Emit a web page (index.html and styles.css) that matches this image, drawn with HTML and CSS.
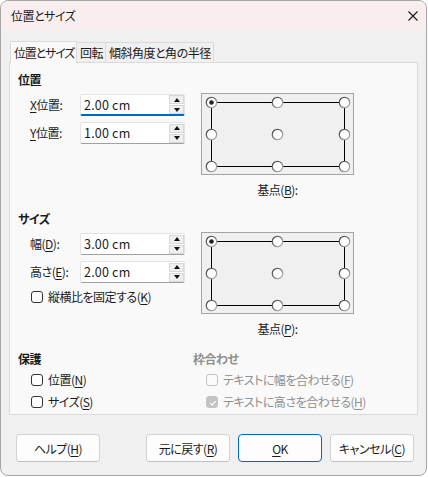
FILE: index.html
```html
<!DOCTYPE html>
<html lang="ja">
<head>
<meta charset="utf-8">
<title>位置とサイズ</title>
<link rel="stylesheet" href="styles.css">
</head>
<body>
<div class="window">
  <div class="titlebar">
    <span class="title">位置とサイズ</span>
    <svg class="close" width="10" height="10" viewBox="0 0 10 10"><path d="M0.5 0.5 L9.5 9.5 M9.5 0.5 L0.5 9.5" stroke="#1a1a1a" stroke-width="1.1" fill="none"/></svg>
  </div>
  <div class="tabs">
    <div class="tab active">位置とサイズ</div>
    <div class="tab">回転</div>
    <div class="tab">傾斜角度と角の半径</div>
  </div>
  <div class="panel">
    <div class="heading">位置</div>
    <div class="group-body">
      <div class="fields">
        <div class="row"><span class="label"><u>X</u>位置:</span>
          <div class="spin focused"><span class="val">2.00 cm</span><div class="arrows"><b class="up"></b><b class="down"></b></div></div>
        </div>
        <div class="row"><span class="label"><u>Y</u>位置:</span>
          <div class="spin"><span class="val">1.00 cm</span><div class="arrows"><b class="up"></b><b class="down"></b></div></div>
        </div>
      </div>
      <div class="anchor">
        <svg width="153" height="82" viewBox="0 0 153 82">
          <defs><linearGradient id="g1" x1="0" y1="0" x2="1" y2="1"><stop offset="0" stop-color="#3c3c3c"/><stop offset="1" stop-color="#c0c0c0"/></linearGradient></defs>
          <rect x="0.5" y="0.5" width="152" height="81" fill="#f0f0f0" stroke="#a3a3a3"/>
          <rect x="10.5" y="9.5" width="133" height="64" fill="none" stroke="#000"/>
          <g fill="#fff" stroke="url(#g1)" stroke-width="1.3">
            <circle cx="10.5" cy="9.5" r="5.2"/><circle cx="76.5" cy="9.5" r="5.2"/><circle cx="143.5" cy="9.5" r="5.2"/>
            <circle cx="10.5" cy="41.5" r="5.2"/><circle cx="76.5" cy="41.5" r="5.2"/><circle cx="143.5" cy="41.5" r="5.2"/>
            <circle cx="10.5" cy="73.5" r="5.2"/><circle cx="76.5" cy="73.5" r="5.2"/><circle cx="143.5" cy="73.5" r="5.2"/>
          </g>
          <circle cx="10.5" cy="9.5" r="2.3" fill="#222"/>
        </svg>
        <div class="caption">基点(<u>B</u>):</div>
      </div>
    </div>

    <div class="heading sec2">サイズ</div>
    <div class="group-body">
      <div class="fields">
        <div class="row"><span class="label">幅(<u>D</u>):</span>
          <div class="spin"><span class="val">3.00 cm</span><div class="arrows"><b class="up"></b><b class="down"></b></div></div>
        </div>
        <div class="row"><span class="label">高さ(<u>E</u>):</span>
          <div class="spin"><span class="val">2.00 cm</span><div class="arrows"><b class="up"></b><b class="down"></b></div></div>
        </div>
        <div class="check keep"><span class="box"></span><span>縦横比を固定する(<u>K</u>)</span></div>
      </div>
      <div class="anchor">
        <svg width="153" height="82" viewBox="0 0 153 82">
          <defs><linearGradient id="g2" x1="0" y1="0" x2="1" y2="1"><stop offset="0" stop-color="#3c3c3c"/><stop offset="1" stop-color="#c0c0c0"/></linearGradient></defs>
          <rect x="0.5" y="0.5" width="152" height="81" fill="#f0f0f0" stroke="#a3a3a3"/>
          <rect x="10.5" y="9.5" width="133" height="64" fill="none" stroke="#000"/>
          <g fill="#fff" stroke="url(#g2)" stroke-width="1.3">
            <circle cx="10.5" cy="9.5" r="5.2"/><circle cx="76.5" cy="9.5" r="5.2"/><circle cx="143.5" cy="9.5" r="5.2"/>
            <circle cx="10.5" cy="41.5" r="5.2"/><circle cx="76.5" cy="41.5" r="5.2"/><circle cx="143.5" cy="41.5" r="5.2"/>
            <circle cx="10.5" cy="73.5" r="5.2"/><circle cx="76.5" cy="73.5" r="5.2"/><circle cx="143.5" cy="73.5" r="5.2"/>
          </g>
          <circle cx="10.5" cy="9.5" r="2.3" fill="#222"/>
        </svg>
        <div class="caption">基点(<u>P</u>):</div>
      </div>
    </div>

    <div class="bottom-groups">
      <div class="col">
        <div class="heading">保護</div>
        <div class="check"><span class="box"></span><span>位置(<u>N</u>)</span></div>
        <div class="check"><span class="box"></span><span>サイズ(<u>S</u>)</span></div>
      </div>
      <div class="col disabled">
        <div class="heading">枠合わせ</div>
        <div class="check"><span class="box"></span><span>テキストに幅を合わせる(<u>F</u>)</span></div>
        <div class="check"><span class="box checked"><svg width="12" height="12" viewBox="0 0 12 12"><path d="M3.2 6.2 L5.2 8 L8.8 4.2" stroke="#fff" stroke-width="1.2" fill="none"/></svg></span><span>テキストに高さを合わせる(<u>H</u>)</span></div>
      </div>
    </div>
  </div>
  <div class="buttons">
    <button class="btn help">ヘルプ(<u>H</u>)</button>
    <button class="btn">元に戻す(<u>R</u>)</button>
    <button class="btn ok"><u>O</u>K</button>
    <button class="btn">キャンセル(<u>C</u>)</button>
  </div>
</div>
</body>
</html>
```
FILE: styles.css
```css
html, body {
  margin: 0;
  background: #ffffff;
}
body {
  font-family: "Noto Sans CJK JP", "Noto Sans", sans-serif;
  font-size: 12px;
  line-height: 16px;
  color: #1b1b1b;
  font-feature-settings: "palt";
  letter-spacing: -0.5px;
}
u {
  text-decoration: underline;
  text-underline-offset: 2px;
  text-decoration-thickness: 1px;
}
.window {
  width: 427px;
  height: 476px;
  box-sizing: border-box;
  border: 1px solid #a6a6a6;
  border-radius: 8px;
  background: #f0f0f0;
  overflow: hidden;
  display: flex;
  flex-direction: column;
}
.titlebar {
  height: 30px;
  flex: none;
  background: #f9eeee;
  display: flex;
  align-items: center;
  justify-content: space-between;
  padding: 0 8px 0 10px;
}
.title {
  padding-bottom: 1px;
}
.close {
  display: block;
  margin-bottom: 1px;
}
.tabs {
  display: flex;
  align-items: flex-end;
  height: 21px;
  margin: 10px 0 0 9px;
  flex: none;
}
.tab {
  height: 20px;
  box-sizing: border-box;
  line-height: 19px;
  padding: 0 2px 0 3px;
  border: 1px solid #dadada;
  border-bottom: none;
  background: #f0f0f0;
  margin-left: -1px;
}
.tab:first-child {
  margin-left: 0;
}
.tab.active {
  height: 22px;
  line-height: 21px;
  background: #f9f9f9;
  margin-bottom: -1px;
  position: relative;
  z-index: 1;
  letter-spacing: -1.2px;
}
.panel {
  margin: 0 8px;
  height: 353px;
  flex: none;
  box-sizing: border-box;
  border: 1px solid #dadada;
  background: #f9f9f9;
  padding: 9px 8px 0 8px;
}
.heading {
  font-weight: 700;
  height: 16px;
}
.heading.sec2 {
  margin-top: 13px;
}
.group-body {
  display: flex;
  margin-top: 5px;
}
.fields {
  width: 183px;
  box-sizing: border-box;
  padding: 1px 0 0 12px;
  display: flex;
  flex-direction: column;
  gap: 6px;
}
.row {
  display: flex;
  align-items: center;
  height: 22px;
}
.label {
  width: 50px;
}
.spin {
  width: 105px;
  height: 22px;
  box-sizing: border-box;
  border: 1px solid #e3e3e3;
  border-bottom-color: #a0a0a0;
  background: #ffffff;
  display: flex;
  align-items: center;
  border-radius: 2px;
}
.spin.focused {
  border-bottom: 2px solid #0067c0;
}
.val {
  flex: 1;
  padding-left: 3px;
  letter-spacing: 0.2px;
  font-size: 12.5px;
}
.arrows {
  width: 15px;
  display: flex;
  flex-direction: column;
  gap: 1px;
}
.arrows b {
  height: 9px;
  box-sizing: border-box;
  background: #efefef;
  border: 1px solid #d8d8d8;
  display: flex;
  align-items: center;
  justify-content: center;
}
.arrows b::before {
  content: "";
  width: 0;
  height: 0;
  border-left: 3.5px solid transparent;
  border-right: 3.5px solid transparent;
}
.arrows .up::before {
  border-bottom: 4px solid #111;
}
.arrows .down::before {
  border-top: 4px solid #111;
}
.anchor {
  width: 153px;
  display: flex;
  flex-direction: column;
  align-items: center;
}
.anchor svg {
  display: block;
}
.caption {
  margin-top: 7px;
  height: 16px;
}
.check {
  display: flex;
  align-items: center;
  height: 16px;
  gap: 5px;
  margin-left: 1px;
}
.box {
  width: 12px;
  height: 12px;
  box-sizing: border-box;
  border: 1px solid #333333;
  border-radius: 3px;
  background: #ffffff;
  flex: none;
}
.box svg {
  display: block;
}
.bottom-groups {
  display: grid;
  grid-template-columns: 175px 1fr;
  margin-top: 14px;
}
.col {
  display: flex;
  flex-direction: column;
}
.col .check {
  margin-left: 13px;
  margin-top: 6px;
}
.col .heading + .check {
  margin-top: 5px;
}
.disabled {
  color: #8f8f8f;
}
.disabled .box {
  border-color: #c2c2c2;
  background: #fbfbfb;
}
.disabled .box.checked {
  background: #c3c3c3;
  border-color: #c3c3c3;
}
.buttons {
  display: flex;
  gap: 8px;
  margin-top: 19px;
  padding: 0 12px 0 15px;
}
.btn {
  width: 84px;
  height: 28px;
  box-sizing: border-box;
  background: #fdfdfd;
  border: 1px solid #d3d3d3;
  border-bottom-color: #c0c0c0;
  border-radius: 4px;
  font-family: inherit;
  font-size: 12px;
  letter-spacing: -0.5px;
  color: #1b1b1b;
  padding: 0;
  font-feature-settings: "palt";
}
.btn.help {
  margin-right: auto;
}
.btn.ok {
  border: 1px solid #0067c0;
}
```
